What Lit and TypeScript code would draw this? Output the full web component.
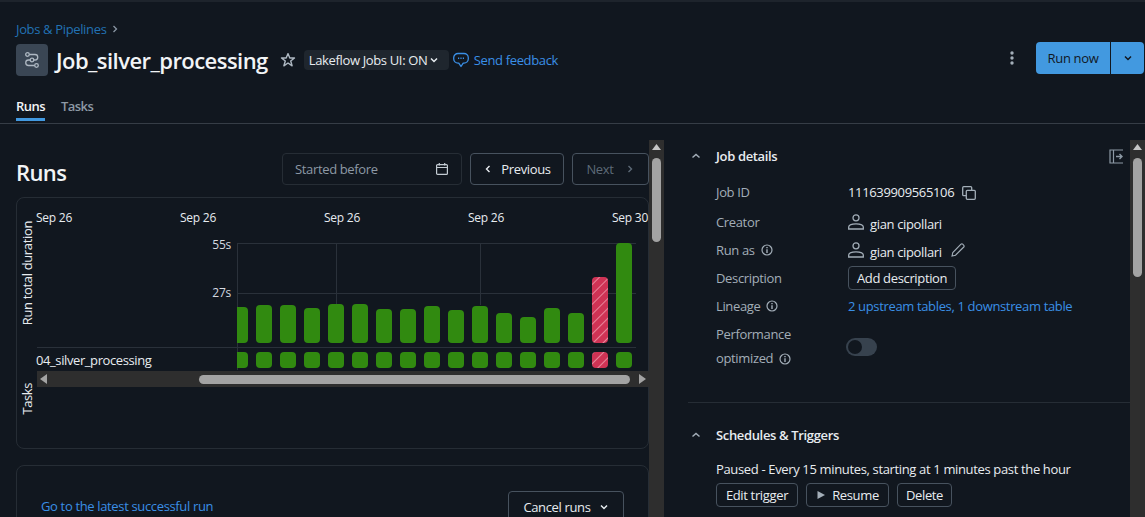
import { LitElement, css, html, svg } from "lit";
import { customElement } from "lit/decorators.js";

// top y of each run bar; the plot's baseline sits at y=100 (page y 343)
const barTops = [307, 305, 305, 308, 304, 304, 309, 309, 306, 310, 306, 313, 317, 308, 313, 277, 243];
const FAILED = 15;

const chevronDown = html`<svg class="ic" width="10" height="10" viewBox="0 0 10 10"><path d="M2 3.5 5 6.5 8 3.5" fill="none" stroke="currentColor" stroke-width="1.5"/></svg>`;
const chevronUp = html`<svg class="ic" width="10" height="10" viewBox="0 0 10 10"><path d="M1.5 6.5 5 3.5 8.5 6.5" fill="none" stroke="currentColor" stroke-width="1.5"/></svg>`;
const info = html`<svg class="info" width="12" height="12" viewBox="0 0 12 12"><circle cx="6" cy="6" r="5" fill="none" stroke="currentColor" stroke-width="1.2"/><path d="M6 5.3V9M6 3v1.3" stroke="currentColor" stroke-width="1.4"/></svg>`;
const person = html`<svg class="person" width="16" height="16" viewBox="0 0 16 16" fill="none" stroke="currentColor" stroke-width="1.3"><circle cx="8" cy="3.800" r="3"/><path d="M.7 15v-2c0-1.900 3.200-3.200 7.300-3.200s7.300 1.300 7.300 3.200v2z"/></svg>`;

@customElement("app-root")
export class AppRoot extends LitElement {
  private plot() {
    return svg`
      <svg class="plot-svg" width="399" height="127" viewBox="0 0 399 127">
        <defs>
          <pattern id="hatch" width="7" height="7" patternUnits="userSpaceOnUse" patternTransform="rotate(45)">
            <rect width="7" height="7" fill="#cf3355"/>
            <rect width="1" height="7" fill="#e8879c"/>
          </pattern>
        </defs>
        <g stroke="#2a313a" stroke-width="1">
          <path d="M0 .5H399M0 50.5H399M0 104.5H399"/>
          <path d="M.5 0V127M99.5 0V62M243.5 0V62"/>
        </g>
        ${barTops.map((top, i) => {
          const x = i * 24 - 5;
          const fill = i === FAILED ? "url(#hatch)" : "#318a10";
          return svg`
            <rect x=${x} y=${top - 243} width="16" height=${343 - top} rx="4" fill=${fill}/>
            <rect x=${x} y="109" width="16" height="16" rx="4" fill=${fill}/>`;
        })}
      </svg>
    `;
  }

  render() {
    return html`
      <div class="page">
        <header>
          <div class="crumb">Jobs &amp; Pipelines <svg width="10" height="10" viewBox="0 0 10 10"><path d="M3.5 2 6.5 5 3.5 8" fill="none" stroke="#8a96a3" stroke-width="1.3"/></svg></div>
          <div class="title-row">
            <span class="tile">
              <svg width="16" height="16" viewBox="0 0 16 16" fill="none" stroke="#aeb8c2" stroke-width="1.3">
                <path d="M5.300 2.500H11a2.750 2.750 0 0 1 0 5.500H4.500a2.750 2.750 0 0 0 0 5.500H10.700"/>
                <circle cx="3.500" cy="2.500" r="1.800"/><circle cx="8" cy="8" r="1.800" fill="#3a4654"/><circle cx="12.500" cy="13.500" r="1.800"/>
              </svg>
            </span>
            <h1>Job_silver_processing</h1>
            <svg class="star" width="16" height="16" viewBox="0 0 16 16"><path d="M8 1.600 9.800 6h4.700l-3.800 3 1.400 4.800L8 11l-4.100 2.800L5.300 9 1.500 6h4.700z" fill="none" stroke="#aeb8c2" stroke-width="1.400" stroke-linejoin="round"/></svg>
            <span class="pill">Lakeflow Jobs UI: ON ${chevronDown}</span>
            <svg class="bubble" width="16" height="16" viewBox="0 0 16 16"><path d="M5 1.500h6a4.300 4.300 0 0 1 4.300 4.300v1a4.300 4.300 0 0 1-4.300 4.300h-.800L8 14.500l-2.200-3.400H5A4.300 4.300 0 0 1 .7 6.800v-1A4.300 4.300 0 0 1 5 1.500z" fill="none" stroke="currentColor" stroke-width="1.300" stroke-linejoin="round"/><path d="M5 6.300h1.200M7.400 6.300h1.200M9.800 6.300h1.200" stroke="currentColor" stroke-width="1.400"/></svg>
            <a class="feedback">Send feedback</a>
            <span class="spacer"></span>
            <svg class="dots" width="4" height="14" viewBox="0 0 4 14" fill="#a3aeb8"><circle cx="2" cy="2" r="1.700"/><circle cx="2" cy="7" r="1.700"/><circle cx="2" cy="12" r="1.700"/></svg>
            <div class="run">
              <span class="run-main">Run now</span>
              <span class="run-more">${chevronDown}</span>
            </div>
          </div>
          <nav>
            <a class="on">Runs</a>
            <a>Tasks</a>
          </nav>
        </header>

        <div class="panes">
          <section class="left">
            <div class="left-body">
              <div class="runs-head">
                <h2>Runs</h2>
                <span class="spacer"></span>
                <div class="date">
                  <span>Started before</span>
                  <svg width="14" height="14" viewBox="0 0 14 14" fill="none" stroke="#c3cbd3" stroke-width="1.200"><rect x="1.600" y="2.600" width="10.800" height="9.800" rx="1"/><path d="M1.600 5.500h10.800M4.300 1v2.500M9.700 1v2.500"/></svg>
                </div>
                <button class="btn prev"><svg class="ic" width="10" height="10" viewBox="0 0 10 10"><path d="M6.500 2 3.500 5 6.500 8" fill="none" stroke="currentColor" stroke-width="1.400"/></svg> Previous</button>
                <button class="btn next">Next <svg class="ic" width="10" height="10" viewBox="0 0 10 10"><path d="M3.500 2 6.500 5 3.500 8" fill="none" stroke="currentColor" stroke-width="1.400"/></svg></button>
              </div>

              <div class="chart">
                <div class="axis">
                  <span class="vert duration">Run total duration</span>
                  <span class="vert tasks">Tasks</span>
                </div>
                <div class="chart-main">
                  <div class="dates">
                    <span>Sep 26</span><span>Sep 26</span><span>Sep 26</span><span>Sep 26</span><span>Sep 30</span>
                  </div>
                  <div class="plot">
                    <div class="labels">
                      <div class="ticks"><span>55s</span><span>27s</span></div>
                      <div class="task-name">04_silver_processing</div>
                    </div>
                    ${this.plot()}
                  </div>
                  <div class="hscroll">
                    <svg width="8" height="10" viewBox="0 0 8 10" fill="#a3a3a3"><path d="M7 0v10L0 5z"/></svg>
                    <span class="hthumb"></span>
                    <svg class="hnext" width="8" height="10" viewBox="0 0 8 10" fill="#a3a3a3"><path d="M1 0v10l7-5z"/></svg>
                  </div>
                </div>
              </div>

              <div class="latest">
                <a>Go to the latest successful run</a>
                <button class="btn cancel">Cancel runs ${chevronDown}</button>
              </div>
            </div>
            <div class="vscroll">
              <svg width="9" height="6" viewBox="0 0 9 6" fill="#c4c4c4"><path d="M4.500 0 9 6H0z"/></svg>
              <span class="vthumb short"></span>
            </div>
          </section>

          <section class="right">
            <div class="right-body">
              <div class="sec-head">
                ${chevronUp}
                <h3>Job details</h3>
                <span class="spacer"></span>
                <svg class="collapse" width="15" height="15" viewBox="0 0 15 15" fill="none" stroke="#8d99a5" stroke-width="1.200"><path d="M14 1H1v13h13M4.500 1v13"/><path d="M7 7.500h6M10.500 5l2.500 2.500-2.500 2.500" stroke-width="1.400"/></svg>
              </div>
              <div class="details">
                <div class="k">Job ID</div>
                <div class="v">111639909565106
                  <svg class="copy" width="14" height="14" viewBox="0 0 14 14" fill="none" stroke="#a3aeb8" stroke-width="1.300"><rect x=".7" y=".7" width="9" height="9" rx="1"/><rect x="4.300" y="4.300" width="9" height="9" rx="1" fill="#11171f"/></svg>
                </div>
                <div class="k">Creator</div>
                <div class="v">${person}<span class="name">gian cipollari</span></div>
                <div class="k">Run as ${info}</div>
                <div class="v">${person}<span class="name">gian cipollari</span>
                  <svg class="pencil" width="14" height="14" viewBox="0 0 14 14" fill="none" stroke="#a3aeb8" stroke-width="1.100"><path d="M1 13l.8-3.500L10 1.200a1.200 1.200 0 0 1 1.700 0l1.100 1.100a1.200 1.200 0 0 1 0 1.700L4.500 12.200z"/></svg>
                </div>
                <div class="k">Description</div>
                <div class="v"><button class="btn small">Add description</button></div>
                <div class="k">Lineage ${info}</div>
                <div class="v"><a>2 upstream tables, 1 downstream table</a></div>
                <div class="k perf">Performance<br />optimized ${info}</div>
                <div class="v toggle-cell"><span class="toggle"><i></i></span></div>
              </div>
              <div class="divider"></div>
              <div class="sec-head second">
                ${chevronUp}
                <h3>Schedules &amp; Triggers</h3>
              </div>
              <div class="paused">Paused - Every 15 minutes, starting at 1 minutes past the hour</div>
              <div class="actions">
                <button class="btn small edit">Edit trigger</button>
                <button class="btn small resume"><svg width="10" height="10" viewBox="0 0 10 10" fill="#a3aeb8"><path d="M1.500 1v8L9 5z"/></svg> Resume</button>
                <button class="btn small delete">Delete</button>
              </div>
            </div>
            <div class="vscroll">
              <svg width="9" height="6" viewBox="0 0 9 6" fill="#c4c4c4"><path d="M4.500 0 9 6H0z"/></svg>
              <span class="vthumb long"></span>
            </div>
          </section>
        </div>
      </div>
    `;
  }

  static styles = css`
    :host {
      display: block;
      height: 100vh;
      overflow: hidden;
      background: #11171f;
      color: #e8ecf0;
      font-family: "Open Sans", "Noto Sans", sans-serif;
      font-size: 13px;
      letter-spacing: -0.35px;
    }

    * {
      box-sizing: border-box;
    }

    a {
      color: #3a8fe6;
    }

    button {
      font: inherit;
      letter-spacing: inherit;
      background: none;
    }

    h1,
    h2,
    h3 {
      margin: 0;
    }

    .spacer {
      flex: 1;
    }

    .ic {
      flex: none;
    }

    .page {
      height: 517px;
      display: flex;
      flex-direction: column;
      border-top: 2px solid #1e242c;
    }

    header {
      height: 122px;
      flex: none;
      padding: 18px 0 0 16px;
      border-bottom: 1px solid #363d46;
    }

    .crumb {
      height: 18px;
      line-height: 18px;
      color: #2272b4;
      display: flex;
      align-items: center;
      gap: 4px;
    }

    .title-row {
      display: flex;
      align-items: center;
      height: 32px;
      margin-top: 6px;
    }

    .tile {
      width: 32px;
      height: 32px;
      border-radius: 4px;
      background: #3a4654;
      display: flex;
      align-items: center;
      justify-content: center;
    }

    h1 {
      margin-left: 8px;
      font-size: 22px;
      font-weight: 600;
      letter-spacing: -0.55px;
      color: #f2f4f6;
    }

    .star {
      margin-left: 12px;
    }

    .pill {
      margin-left: 8px;
      height: 20px;
      width: 145px;
      padding: 0 5px;
      border-radius: 4px;
      background: #1f262e;
      display: flex;
      align-items: center;
      gap: 2px;
      white-space: nowrap;
    }

    .bubble {
      margin-left: 4px;
      color: #3a8fe6;
    }

    .feedback {
      margin-left: 5px;
    }

    .dots {
      margin: 0 22px 4px 0;
    }

    .run {
      width: 108px;
      height: 32px;
      margin: 0 1px 4px 0;
      display: flex;
      border-radius: 4px;
      background: #4299e0;
      color: #11171f;
    }

    .run-main {
      width: 75px;
      display: flex;
      align-items: center;
      justify-content: center;
      border-right: 1px solid #11171f;
    }

    .run-more {
      flex: 1;
      display: flex;
      align-items: center;
      justify-content: center;
    }

    nav {
      display: flex;
      gap: 16px;
      margin-top: 16px;
    }

    nav a {
      height: 29px;
      padding-top: 5px;
      font-weight: 600;
      letter-spacing: -0.55px;
      color: #8d99a5;
    }

    nav a.on {
      color: #f2f4f6;
      border-bottom: 3px solid #4299e0;
    }

    .panes {
      flex: 1;
      display: flex;
      min-height: 0;
    }

    .left {
      width: 664px;
      flex: none;
      display: flex;
      margin-top: 16px;
    }

    .left-body {
      width: 649px;
      padding-left: 16px;
    }

    .vscroll {
      width: 15px;
      background: #2e2e2e;
      display: flex;
      flex-direction: column;
      align-items: center;
      padding-top: 4px;
    }

    .vthumb {
      width: 9px;
      border-radius: 5px;
      background: #a3a3a3;
      margin-top: 8px;
    }

    .vthumb.short {
      height: 84px;
    }

    .vthumb.long {
      height: 119px;
    }

    .runs-head {
      display: flex;
      align-items: center;
      height: 32px;
      margin-top: 13px;
    }

    h2 {
      margin-top: 6px;
      font-size: 22px;
      font-weight: 600;
      letter-spacing: -0.6px;
      color: #f2f4f6;
    }

    .date {
      width: 180px;
      height: 32px;
      padding: 0 12px;
      border: 1px solid #262d35;
      border-radius: 4px;
      display: flex;
      align-items: center;
      justify-content: space-between;
      color: #8d99a5;
    }

    .btn {
      height: 32px;
      padding: 0 12px;
      border: 1px solid #47525e;
      border-radius: 4px;
      color: #e8ecf0;
      display: inline-flex;
      align-items: center;
      justify-content: center;
      white-space: nowrap;
    }

    .prev {
      width: 94px;
      margin-left: 8px;
      gap: 8px;
    }

    .next {
      width: 77px;
      margin-left: 8px;
      gap: 11px;
      color: #5d6a77;
    }

    .chart {
      height: 252px;
      margin-top: 12px;
      border: 1px solid #262d35;
      border-radius: 8px;
      display: flex;
    }

    .axis {
      width: 20px;
      flex: none;
      position: relative;
    }

    .vert {
      position: absolute;
      left: 2px;
      writing-mode: vertical-rl;
      transform: rotate(180deg);
      line-height: 16px;
      white-space: nowrap;
    }

    .duration {
      top: 23px;
    }

    .tasks {
      top: 185px;
      letter-spacing: -0.4px;
    }

    .chart-main {
      width: 612px;
      font-size: 12px;
    }

    .dates {
      display: grid;
      grid-template-columns: repeat(5, 144px);
      height: 45px;
      padding-top: 11px;
      margin-left: -1px;
      line-height: 18px;
      letter-spacing: -0.25px;
      white-space: nowrap;
    }

    .plot {
      display: flex;
      height: 128px;
    }

    .labels {
      width: 200px;
      flex: none;
    }

    .ticks {
      height: 111px;
      margin-top: -7px;
      padding: 0 6px 7px 0;
      display: flex;
      flex-direction: column;
      align-items: flex-end;
      gap: 30px;
      line-height: 18px;
      letter-spacing: -0.25px;
      color: #d5dae0;
    }

    .task-name {
      height: 24px;
      line-height: 24px;
      font-size: 13px;
      letter-spacing: -0.4px;
      text-indent: -1px;
      border-top: 1px solid #2a313a;
    }

    .plot-svg {
      display: block;
    }

    .hscroll {
      height: 16px;
      background: #2e2e2e;
      display: flex;
      align-items: center;
      padding: 0 3px;
    }

    .hthumb {
      height: 9px;
      width: 431px;
      margin-left: 151px;
      border-radius: 5px;
      background: #a3a3a3;
    }

    .hnext {
      margin-left: auto;
    }

    .latest {
      height: 100px;
      margin-top: 16px;
      padding: 25px 24px 0 24px;
      border: 1px solid #262d35;
      border-radius: 8px;
      display: flex;
      justify-content: space-between;
      align-items: flex-start;
    }

    .latest a {
      margin-top: 5px;
      line-height: 20px;
    }

    .cancel {
      width: 116px;
      gap: 8px;
    }

    .right {
      flex: 1;
      display: flex;
      margin-top: 16px;
    }

    .right-body {
      flex: 1;
      min-width: 0;
      padding-left: 24px;
    }

    .sec-head {
      display: flex;
      align-items: center;
      height: 20px;
      margin-top: 6px;
      padding-left: 3px;
      color: #a3aeb8;
    }

    .sec-head h3 {
      margin-left: 15px;
      font-size: 13px;
      font-weight: 600;
      color: #e8ecf0;
    }

    .collapse {
      margin-right: 6px;
    }

    .details {
      display: grid;
      grid-template-columns: 132px 1fr;
      grid-template-rows: 33px 28px 28px 28px 28px 48px;
      margin: 9px 0 0 28px;
    }

    .k,
    .v {
      display: flex;
      align-items: center;
    }

    .k {
      color: #a3aeb8;
      gap: 6px;
    }

    .k.perf {
      display: block;
      line-height: 24px;
      padding-top: 2px;
    }

    .info {
      vertical-align: -2px;
      color: #a3aeb8;
    }

    .perf .info {
      margin-left: 3px;
    }

    .copy {
      margin-left: 8px;
      margin-top: 2px;
    }

    .person {
      color: #a3aeb8;
      margin-right: 6px;
    }

    .name {
      padding-top: 3px;
    }

    .pencil {
      margin-left: 9px;
    }

    .small {
      height: 24px;
      padding: 0 8px;
    }

    .toggle-cell {
      align-items: flex-start;
      padding-top: 18px;
    }

    .toggle {
      width: 31px;
      height: 18px;
      margin-left: -2px;
      border-radius: 9px;
      background: #37424e;
      padding: 2px;
    }

    .toggle i {
      display: block;
      width: 14px;
      height: 14px;
      border-radius: 50%;
      background: #11171f;
    }

    .divider {
      height: 1px;
      margin: 34px 0 0 0;
      background: #262d35;
    }

    .second {
      margin-top: 22px;
    }

    .paused {
      margin: 14px 0 0 28px;
      line-height: 20px;
    }

    .actions {
      display: flex;
      gap: 8px;
      margin: 4px 0 0 28px;
    }

    .edit {
      width: 82px;
      padding: 0;
    }

    .resume {
      width: 83px;
      gap: 6px;
      padding: 0;
    }

    .delete {
      width: 55px;
      padding: 0;
    }
  `;
}
